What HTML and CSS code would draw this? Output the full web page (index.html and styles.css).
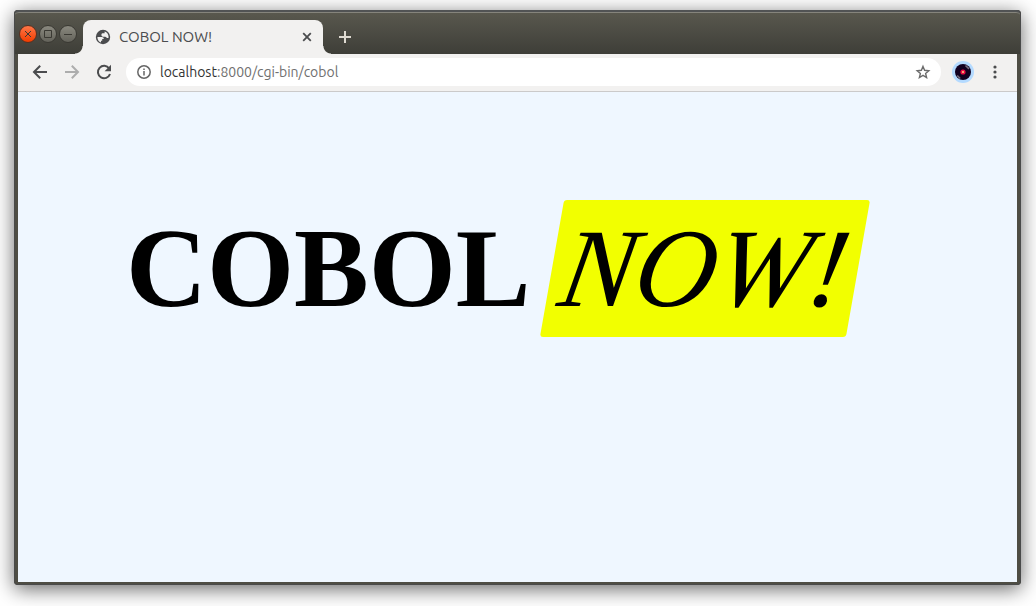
FILE: index.html
```html
<!DOCTYPE html>
<html lang="en">
<head>
<meta charset="utf-8">
<title>COBOL NOW!</title>
<link rel="stylesheet" href="styles.css">
</head>
<body>
<div class="window">
  <header class="titlebar">
    <div class="controls">
      <button class="control control-close" aria-label="Close window"><svg viewBox="0 0 16 16"><path d="M5 5l6 6M11 5l-6 6"/></svg></button>
      <button class="control" aria-label="Maximize"><svg viewBox="0 0 16 16"><path d="M4.5 4.5h7v7h-7z"/></svg></button>
      <button class="control" aria-label="Minimize"><svg viewBox="0 0 16 16"><path d="M4 8.5h8"/></svg></button>
    </div>
    <div class="tab">
      <svg class="globe" viewBox="0 0 16 16"><circle cx="8" cy="8" r="7.2" fill="#4b4c4e"/><path d="M2.4 8h4.4c1.4 0 2 .8 2 2.1H7.2v1.6H6v1.9C3.7 12.7 2.3 10.5 2.4 8zM9.6 2.5c2.5.8 4 3 4 5.5l-.2 1h-1.2c-.9 0-1-1.2-2-1.2H8.8C7.4 7.8 6.4 7 6.4 5.9c0-1.2.9-1.6 1.8-1.6h1.4z" fill="#f2f1f0"/></svg>
      <span class="tab-title">COBOL NOW!</span>
      <button class="plain tab-close" aria-label="Close tab"><svg viewBox="0 0 10 10"><path d="M1.2 1.2l7.6 7.6M8.8 1.2L1.2 8.8"/></svg></button>
    </div>
    <button class="plain new-tab" aria-label="New tab"><svg viewBox="0 0 12 12"><path d="M6 0v12M0 6h12"/></svg></button>
  </header>
  <nav class="toolbar">
    <button class="plain nav-button" aria-label="Back"><svg viewBox="0 0 16 16"><path d="M15 8H2.5M8.2 1.8L2 8l6.2 6.2"/></svg></button>
    <button class="plain nav-button faded" aria-label="Forward"><svg viewBox="0 0 16 16"><path d="M1 8h12.5M7.8 1.8L14 8l-6.2 6.2"/></svg></button>
    <button class="plain nav-button" aria-label="Reload"><svg viewBox="0 0 16 16"><path d="M13.2 4.5A6.2 6.2 0 1 0 14 10"/><path class="solid" d="M15 .8v6.4H8.6z"/></svg></button>
    <div class="address">
      <svg class="info" viewBox="0 0 14 14"><circle cx="7" cy="7" r="6.2"/><path d="M7 6v4.5M7 3.4v1.5"/></svg>
      <a class="url" href="#page"><span class="host">localhost</span>:8000/cgi-bin/cobol</a>
      <button class="plain star" aria-label="Bookmark"><svg viewBox="0 0 16 16"><path d="M8 2.4l1.6 3.9 4.2.4-3.2 2.7 1 4.1L8 11.3l-3.6 2.2 1-4.1-3.2-2.7 4.2-.4z"/></svg></button>
    </div>
    <button class="plain avatar" aria-label="Profile"><svg viewBox="0 0 22 22"><circle cx="11" cy="11" r="11" fill="#b4daff"/><circle cx="11" cy="11" r="8" fill="#120020"/><path d="M13.5 4.5l3.5 3.3M5.2 14.5l3 3" stroke="#777080" stroke-width="1.6"/><circle cx="11" cy="11" r="2.6" fill="#e80b43"/><circle cx="11" cy="11" r="1" fill="#ffd080"/></svg></button>
    <button class="plain menu" aria-label="Menu"><svg viewBox="0 0 4 14"><circle cx="2" cy="2" r="1.6"/><circle cx="2" cy="7" r="1.6"/><circle cx="2" cy="12" r="1.6"/></svg></button>
  </nav>
  <main class="page" id="page">
    <h1 class="headline"><span>COBOL</span> <em class="now">NOW!</em></h1>
  </main>
</div>
</body>
</html>
```
FILE: styles.css
```css
* { box-sizing: border-box; }

body {
  margin: 0;
  min-height: 100vh;
  display: flex;
  padding: 10px 15px 21px 14px;
  background: #fff;
  font-family: Ubuntu, "Noto Sans", "Open Sans", sans-serif;
}

svg { display: block; fill: none; }

.plain {
  padding: 0;
  border: 0;
  background: none;
  color: #4b4c4e;
}

.window {
  flex: 1;
  min-width: 0;
  display: flex;
  flex-direction: column;
  padding: 0 4px 3px;
  background: #4e4d44;
  border-radius: 4px;
  box-shadow: inset 0 0 0 1px #494a4a, 0 4px 20px rgba(0, 0, 0, 0.6);
}

.titlebar {
  display: flex;
  align-items: flex-end;
  height: 44px;
  margin: 0 -3px;
  padding-left: 4px;
  border-top: 2px solid #515354;
  border-radius: 4px 4px 0 0;
  background: linear-gradient(#59584e, #3e3e38);
  box-shadow: inset 0 1px #85847c;
}

.controls {
  display: flex;
  gap: 2px;
  width: 64px;
  height: 29px;
}

.control {
  width: 18px;
  height: 18px;
  padding: 0;
  border: 1px solid #3a3933;
  border-radius: 50%;
  background: linear-gradient(#8a897f, #63625a);
}
.control svg { width: 16px; height: 16px; stroke: #3a3933; stroke-width: 1; }
.control-close { background: linear-gradient(#ff7748, #f03c00); border-color: #5b3020; }

.tab {
  position: relative;
  display: flex;
  align-items: center;
  width: 240px;
  height: 34px;
  padding: 0 11px 0 12px;
  border-radius: 8px 8px 0 0;
  background: #f2f1f0;
  color: #4b4c4e;
  font-size: 15px;
  line-height: 16px;
}
.tab::before,
.tab::after {
  content: "";
  position: absolute;
  bottom: 0;
  width: 8px;
  height: 8px;
}
.tab::before { right: 100%; background: radial-gradient(circle at 0 0, transparent 7px, #f2f1f0 8px); }
.tab::after { left: 100%; background: radial-gradient(circle at 100% 0, transparent 7px, #f2f1f0 8px); }

.globe { width: 16px; height: 16px; margin-right: 8px; }
.tab-title { flex: 1; white-space: nowrap; }
.tab-close svg { width: 10px; height: 10px; stroke: currentColor; stroke-width: 1.8; }
.new-tab { align-self: center; padding: 7px 0 0 16px; }
.new-tab svg { width: 12px; height: 12px; stroke: #dfdbd2; stroke-width: 2; }

.toolbar {
  display: flex;
  align-items: center;
  height: 38px;
  padding: 0 20px 1px 14px;
  background: #f2f1f0;
  border-bottom: 1px solid #cbcaca;
}

.nav-button { width: 16px; margin-right: 16px; }
.nav-button svg { width: 16px; height: 16px; stroke: currentColor; stroke-width: 2; }
.nav-button .solid { fill: currentColor; stroke: none; }
.nav-button.faded { color: #adadad; }

.address {
  flex: 1;
  display: flex;
  align-items: center;
  height: 28px;
  margin-left: -2px;
  padding: 0 10px 0 11px;
  border-radius: 14px;
  background: #fff;
}
.info { width: 14px; height: 14px; margin-right: 9px; stroke: #666; stroke-width: 1.5; }
.url { flex: 1; color: #6f6f6f; font-size: 14px; text-decoration: none; }
.host { color: #333; }
.star svg { width: 16px; height: 16px; stroke: #6b6b6b; stroke-width: 1.4; }
.avatar { margin-left: 11px; }
.avatar svg { width: 22px; height: 22px; }
.menu { margin-left: 19px; }
.menu svg { width: 4px; height: 14px; fill: currentColor; }

.page {
  flex: 1;
  padding: 108px;
  background: #eff7ff;
}

.headline {
  display: flex;
  align-items: center;
  gap: 21px;
  margin: 0;
  color: #000;
  font: bold 112px/129px "Liberation Serif", "Times New Roman", serif;
}

.now {
  padding: 4px 10px;
  border-radius: 3px;
  background: #f2ff00;
  font-weight: normal;
  transform: skewX(-10deg);
}
```
